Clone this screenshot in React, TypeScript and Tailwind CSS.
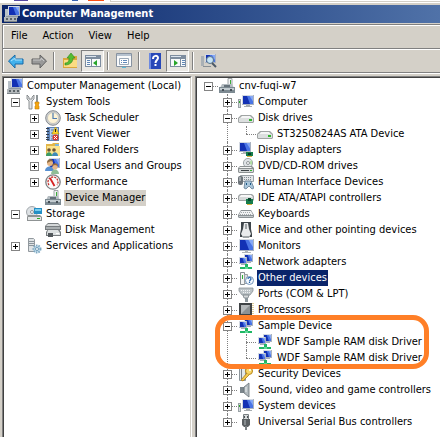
import React from "react";

type IconName =
  | "manage" | "tools" | "clock" | "event" | "folderShare" | "users" | "perf" | "device"
  | "storage" | "diskMgmt" | "services" | "computer" | "drive" | "display" | "dvd" | "hid"
  | "ide" | "keyboard" | "mouse" | "monitor" | "network" | "unknown" | "port" | "cpu"
  | "security" | "sound" | "usb";

const Screen = ({ x, y, w, h }: { x: number; y: number; w: number; h: number }) => (
  <g>
    <rect x={x} y={y} width={w} height={h} fill="#a9b2c0" />
    <rect x={x} y={y} width={w - 1} height={h - 1} fill="#d3d9e2" />
    <rect x={x + 1} y={y + 1} width={w - 2} height={h - 2} fill="#1331b4" />
    <path d={`M${x + w - 1} ${y + 1}v${h - 2}h-${(w - 2) * 0.3}l-${(w - 2) * 0.3} -${h - 2}z`} fill="#4a74e4" />
    <path d={`M${x + w - 1} ${y + 1}v${(h - 2) * 0.7}l-${(w - 2) * 0.35} -${(h - 2) * 0.7}z`} fill="#86a8f4" />
  </g>
);

const DriveBody = ({ y }: { y: number }) => (
  <g>
    <path d={`M3 ${y}h10l3 3v4l-1 1H1l-1-1v-4z`} fill="#a0a4a4" />
    <path d={`M4 ${y + 1}h8l2 2H2z`} fill="#f4f5f5" />
    <rect x="1" y={y + 3} width="14" height="4" fill="#dcdfdf" />
    <rect x="11" y={y + 4} width="3" height="2" fill="#2fb52b" />
  </g>
);

const art: Record<IconName, React.ReactNode> = {
  manage: (
    <g>
      <Screen x={4} y={0} w={12} h={10} />
      <rect x="1" y="3" width="3" height="8" fill="#b9c1c8" />
      <path d="M2 10h12v2H2z" fill="#8f99a2" />
      <path d="M0 11h13v4H0z" fill="#b3b8bb" />
      <path d="M2 12h2v2H2zM6 12h2v2H6zM10 12h2v2h-2z" fill="#5a6368" />
      <path d="M0 15h13v1H0z" fill="#7d8488" />
    </g>
  ),
  tools: (
    <g>
      <path d="M1 1v4l2 2v8h3V7l2-2V1L6 3v2H3V3z" fill="#e3e5e6" stroke="#73787b" strokeWidth=".8" />
      <path d="M10 1h2v7h-2z" fill="#8f9698" />
      <path d="M9 8h4v2l-1 1 1 1v3H9v-3l1-1-1-1z" fill="#f5a50d" stroke="#c57c08" strokeWidth=".6" />
    </g>
  ),
  clock: (
    <g>
      <circle cx="8" cy="8" r="7.3" fill="#d0d3d5" stroke="#85898d" />
      <circle cx="8" cy="8" r="5.5" fill="#fdf3d6" stroke="#a6a8a8" strokeWidth=".5" />
      <path d="M8 3v5.5h4" fill="none" stroke="#4f7cb0" strokeWidth="1.2" />
    </g>
  ),
  event: (
    <g>
      <rect x="2" y="1" width="12" height="14" fill="#5f84b8" />
      <rect x="5" y="2" width="8" height="12" fill="#b7cfec" />
      <path d="M1 2.500h3M1 5.500h3M1 8.500h3M1 11.500h3M1 13.500h3" stroke="#333d4a" />
      <path d="M6 4h3M6 7h3M6 10h3M6 13h6" stroke="#537ab0" />
      <path d="M10.500 1L14 8H7z" fill="#ffd52b" stroke="#b48c00" strokeWidth=".6" />
      <path d="M10.500 3v3" stroke="#222" />
      <circle cx="10.500" cy="11.500" r="3" fill="#d7352c" />
      <path d="M9 10l3 3m0-3l-3 3" stroke="#fff" />
    </g>
  ),
  folderShare: (
    <g>
      <path d="M1 2h6l1-1h6v13H1z" fill="#e2b64a" />
      <path d="M2 4h13v10H2z" fill="#fbe490" />
      <path d="M10 2h4v2h-4z" fill="#80b6da" />
      <circle cx="4" cy="8" r="1.800" fill="#6d5334" />
      <circle cx="9" cy="8" r="1.800" fill="#6d5334" />
      <path d="M1 14c0-5 6-5 6 0z" fill="#3b9a66" />
      <path d="M7 14c0-5 6-5 6 0z" fill="#3d8aba" />
    </g>
  ),
  users: (
    <g>
      <Screen x={4} y={0} w={11} h={10} />
      <circle cx="5" cy="5" r="3" fill="#e6b483" />
      <path d="M2 5c0-5 6-5 6-1L6 3z" fill="#8a6a42" />
      <path d="M0 13c0-6 9-6 9 0z" fill="#578fd0" />
      <circle cx="10" cy="9" r="2.600" fill="#e8b789" />
      <path d="M7 8c1-4 6-3 6 0l-3-1z" fill="#9a6b38" />
      <path d="M6 16c0-6 8-6 8 0z" fill="#8fbd96" />
    </g>
  ),
  perf: (
    <g>
      <circle cx="8" cy="8" r="7.200" fill="#fbfbfb" stroke="#7d8184" strokeWidth="1.300" />
      <path d="M4 11a5 5 0 1 1 8 0" fill="none" stroke="#c42f2a" strokeWidth="1.300" strokeDasharray="2 1" />
      <path d="M5 4l4.500 8" stroke="#d62222" strokeWidth="1.800" />
    </g>
  ),
  device: (
    <g>
      <path d="M9 .5h4v7H9z" fill="#f0f2f2" stroke="#8a9094" strokeWidth=".8" />
      <rect x="11" y="2" width="1" height="4" fill="#3eae3c" />
      <path d="M3 6h10l2 4H1z" fill="#b4bcc1" />
      <path d="M5 7h6v2H5z" fill="#66727b" />
      <path d="M0 9h16v6H0z" fill="#7d8a92" />
      <path d="M1 10h14v2H1z" fill="#c2cbd0" />
      <path d="M3 11h2v2H3zM11 11h2v2h-2z" fill="#444e56" />
    </g>
  ),
  storage: (
    <g>
      <circle cx="6" cy="6" r="5.500" fill="#dde1e4" stroke="#a2a8ac" />
      <circle cx="6" cy="6" r="1.500" fill="#fff" stroke="#92989c" />
      <rect x="8" y="2" width="8" height="6" fill="#248fc5" />
      <rect x="9" y="3" width="6" height="2" fill="#77cdee" />
      <path d="M2 9h12l2 2v4H1v-4z" fill="#8f9394" />
      <path d="M2 11h13v3H2z" fill="#e4e6e6" />
      <rect x="11" y="12" width="3" height="1" fill="#2bae26" />
    </g>
  ),
  diskMgmt: (
    <g>
      <path d="M3 1h10l3 3v4H0V4z" fill="#777c7f" />
      <path d="M3 2h10l2 2H1z" fill="#d5d8d9" />
      <path d="M1 5h14v2H1z" fill="#aaafb1" />
      <path d="M3 7h11l2 3v4H1v-4z" fill="#777c7f" />
      <path d="M3 8h10l2 3v2H2v-2z" fill="#dce0e1" />
      <path d="M3 11h5v4H3z" fill="#52585c" />
      <path d="M11 11h3v1h-3z" fill="#fff" />
    </g>
  ),
  services: (
    <g>
      <path d="M2.500.5h5l1 1v12h-6z" fill="#dfe3e5" stroke="#92999e" />
      <path d="M3 3.500h5M3 5.500h5M3 7.500h5" stroke="#8b959c" />
      <circle cx="11" cy="11" r="3.500" fill="#c5ddec" stroke="#7fa9c2" strokeWidth="2" strokeDasharray="1.500 1" />
      <circle cx="11" cy="11" r="1.500" fill="#fff" stroke="#6c9ab6" />
    </g>
  ),
  computer: (
    <g>
      <Screen x={4} y={1} w={12} h={10} />
      <path d="M8 11h4v1h2v1H6v-1h2z" fill="#a7acb0" />
      <rect x="0" y="5" width="3" height="9" fill="#9aa2a6" />
      <rect x="1" y="6" width="1" height="7" fill="#d5dadc" />
      <rect x="1" y="7" width="1" height="2" fill="#2ea62d" />
    </g>
  ),
  drive: <DriveBody y={5} />,
  display: (
    <g>
      <Screen x={1} y={0} w={12} h={10} />
      <path d="M5 10h4v2H3v-1h2z" fill="#b1b5b7" />
      <rect x="8" y="10" width="7" height="4" fill="#167c4b" />
      <rect x="10" y="11" width="3" height="2" fill="#073a25" />
      <path d="M9 14.500h5" stroke="#d9b040" />
    </g>
  ),
  dvd: (
    <g>
      <circle cx="10" cy="5" r="4.600" fill="#dfe3e6" stroke="#8d9498" strokeWidth=".8" />
      <path d="M10 5l4-3v5z" fill="#b1dda4" />
      <circle cx="10" cy="5" r="1.500" fill="#fff" stroke="#92979a" />
      <path d="M2 8h12l2 2v4l-1 1H1l-1-1v-4z" fill="#8c9192" />
      <path d="M2 9h11l1 1H1z" fill="#f3f4f4" />
      <rect x="1" y="11" width="14" height="3" fill="#d4d7d8" />
      <rect x="3" y="12" width="8" height="1" fill="#3d4447" />
      <rect x="12" y="12" width="2" height="1" fill="#2fb52b" />
    </g>
  ),
  hid: (
    <g>
      <path d="M2.500 1.500h13v6h-13z" fill="#e2e5e8" stroke="#9aa1a6" />
      <path d="M4 3.500h10M4 5.500h10" stroke="#858d92" strokeDasharray="1 1" />
      <rect x="0" y="2" width="5" height="9" rx="2" fill="#6c7379" />
      <path d="M2 3v4" stroke="#dce1e4" />
      <path d="M7 7h6l3 7-2 1-3-3-3 3-2-1z" fill="#a9c5da" stroke="#567087" strokeWidth=".7" />
      <path d="M8 9h1v2H8zM12 9h1v2h-1z" fill="#1d5884" />
    </g>
  ),
  ide: (
    <g>
      <path d="M2 4h12l2 2v4l-1 1H1l-1-1V6z" fill="#a2a6a7" />
      <path d="M3 5h10l2 2H1z" fill="#f7f7f7" />
      <rect x="1" y="7" width="14" height="3" fill="#d6d9d9" />
      <rect x="8" y="9" width="7" height="5" fill="#167c4b" />
      <path d="M10 8h3v3h-3z" fill="#0a4a30" />
      <path d="M9 14.500h5" stroke="#d9b040" />
    </g>
  ),
  keyboard: (
    <g>
      <path d="M3 4h10l3 5v2l-1 1H1l-1-1V9z" fill="#8b9195" />
      <path d="M3 5h10l2 4H1z" fill="#f1f2f3" />
      <path d="M3 6.500h10M2 8.500h12" stroke="#a2a8ac" strokeDasharray="1 1" />
      <path d="M1 10h14v1H1z" fill="#c4c9cc" />
    </g>
  ),
  mouse: (
    <g>
      <path d="M3 0h10v7l1 5v3H2v-3l1-5z" fill="#3d4449" />
      <path d="M6 1h4l1 6 2 5-2 3H5l-2-3 2-5z" fill="#e9ebec" />
      <path d="M8 2v5" stroke="#555d62" />
      <path d="M4 14h8l-1 2H5z" fill="#a1a6a8" />
    </g>
  ),
  monitor: (
    <g>
      <Screen x={1} y={1} w={15} h={12} />
      <path d="M7 13h3v1h3v1H4v-1h3z" fill="#b0b5b8" />
    </g>
  ),
  network: (
    <g>
      <Screen x={6} y={0} w={9} h={8} />
      <path d="M8 8h5v1H8z" fill="#a5afb7" />
      <Screen x={1} y={3} w={8} h={7} />
      <path d="M3 10h4v1H3z" fill="#a5afb7" />
      <path d="M7 10h3v3h4v2H2v-2h5z" fill="#20b765" />
      <path d="M7 13h3v2H7z" fill="#5fd898" />
    </g>
  ),
  unknown: (
    <g>
      <path d="M2.500 2.500h4v12h-4z" fill="#f4f5f5" stroke="#878d91" />
      <path d="M6.500 4.500h3v9h-3z" fill="#dcdfe0" stroke="#9ba0a4" />
      <rect x="4" y="5" width="1" height="4" fill="#31b235" />
      <circle cx="11.500" cy="10.500" r="4" fill="#f4f8fd" stroke="#7395bb" />
      <path d="M10 9c0-2 3-2 3 0 0 1-1.500 1-1.500 2.500m0 .5v1" fill="none" stroke="#2461a8" strokeWidth="1.200" />
    </g>
  ),
  port: (
    <g>
      <path d="M1 2h14v3l-3 4H4L1 5z" fill="#bcc3c7" stroke="#8b9398" strokeWidth=".8" />
      <path d="M3 4.500h10M5 6.500h7" stroke="#f0f2f3" strokeDasharray="1 1" />
      <path d="M5 9h6l-1 3H6z" fill="#d5d9db" stroke="#7b8489" strokeWidth=".8" />
      <path d="M7 12h3v4H7z" fill="#8c969c" />
    </g>
  ),
  cpu: (
    <g>
      <path d="M15 1v14M1 15h14" stroke="#c6a33c" strokeDasharray="1 1" />
      <rect x="1" y="1" width="13" height="13" fill="#3f4346" />
      <path d="M3 3h9v9H3z" fill="#8d9294" />
      <path d="M3 3h9l-9 9z" fill="#b4b8ba" />
    </g>
  ),
  security: (
    <g>
      <path d="M1.500 2.500h6v12h-6z" fill="#e2e7ea" stroke="#8c959b" />
      <path d="M3.500 1v12" stroke="#777f86" />
      <circle cx="11" cy="5" r="3.500" fill="#f7d768" stroke="#b88519" />
      <circle cx="12" cy="4" r="1" fill="#fff" />
      <path d="M9 7l-6 7 2 1 6-6" fill="#f2c94d" stroke="#ac7b18" strokeWidth=".8" />
    </g>
  ),
  sound: (
    <g>
      <path d="M2 5h4v6H2z" fill="#7b858b" />
      <path d="M6 5l5-4v14l-5-4z" fill="#b3bbbf" stroke="#687177" strokeWidth=".8" />
      <path d="M8 5v5" stroke="#eef1f2" />
    </g>
  ),
  usb: (
    <g>
      <path d="M5.500.5h5v5h-5z" fill="#d6dadb" stroke="#777d80" />
      <path d="M6 2h1v2H6zM9 2h1v2H9z" fill="#4d5356" />
      <path d="M4 5h8v6l-2 2H6l-2-2z" fill="#5a5f62" />
      <path d="M6 6h2v5H6z" fill="#858b8e" />
      <path d="M7 12h2v4H7z" fill="#7b8184" />
    </g>
  ),
};

function Icon({ name }: { name: IconName }) {
  return (
    <svg viewBox="0 0 16 16" className="size-4 shrink-0" aria-hidden="true">
      {art[name]}
    </svg>
  );
}

type TreeNode = {
  label: string;
  icon: IconName;
  state?: "open" | "closed";
  mark?: "active" | "inactive";
  ringed?: boolean;
  children?: TreeNode[];
};

const consoleTree: TreeNode[] = [
  {
    label: "System Tools", icon: "tools", state: "open",
    children: [
      { label: "Task Scheduler", icon: "clock", state: "closed" },
      { label: "Event Viewer", icon: "event", state: "closed" },
      { label: "Shared Folders", icon: "folderShare", state: "closed" },
      { label: "Local Users and Groups", icon: "users", state: "closed" },
      { label: "Performance", icon: "perf", state: "closed" },
      { label: "Device Manager", icon: "device", mark: "inactive" },
    ],
  },
  { label: "Storage", icon: "storage", state: "open", children: [{ label: "Disk Management", icon: "diskMgmt" }] },
  { label: "Services and Applications", icon: "services", state: "closed" },
];

const deviceTree: TreeNode = {
  label: "cnv-fuqi-w7", icon: "device", state: "open",
  children: [
    { label: "Computer", icon: "computer", state: "closed" },
    { label: "Disk drives", icon: "drive", state: "open", children: [{ label: "ST3250824AS ATA Device", icon: "drive" }] },
    { label: "Display adapters", icon: "display", state: "closed" },
    { label: "DVD/CD-ROM drives", icon: "dvd", state: "closed" },
    { label: "Human Interface Devices", icon: "hid", state: "closed" },
    { label: "IDE ATA/ATAPI controllers", icon: "ide", state: "closed" },
    { label: "Keyboards", icon: "keyboard", state: "closed" },
    { label: "Mice and other pointing devices", icon: "mouse", state: "closed" },
    { label: "Monitors", icon: "monitor", state: "closed" },
    { label: "Network adapters", icon: "network", state: "closed" },
    { label: "Other devices", icon: "unknown", state: "closed", mark: "active" },
    { label: "Ports (COM & LPT)", icon: "port", state: "closed" },
    { label: "Processors", icon: "cpu", state: "closed" },
    {
      label: "Sample Device", icon: "network", state: "open", ringed: true,
      children: [
        { label: "WDF Sample RAM disk Driver", icon: "network" },
        { label: "WDF Sample RAM disk Driver", icon: "network" },
      ],
    },
    { label: "Security Devices", icon: "security", state: "closed" },
    { label: "Sound, video and game controllers", icon: "sound", state: "closed" },
    { label: "System devices", icon: "computer", state: "closed" },
    { label: "Universal Serial Bus controllers", icon: "usb", state: "closed" },
  ],
};

function Expander({ open, label }: { open: boolean; label: string }) {
  return (
    <button type="button" aria-label={`${open ? "Collapse" : "Expand"} ${label}`} className="relative block size-[9px] border border-[#848484] bg-white">
      <svg viewBox="0 0 7 7" className="block size-[7px]" shapeRendering="crispEdges">
        <path d={open ? "M1 3h5v1H1z" : "M1 3h5v1H1zM3 1h1v5H3z"} fill="#000" />
      </svg>
    </button>
  );
}

function Branch({ node, lines, root, last }: { node: TreeNode; lines: boolean; root?: boolean; last?: boolean }) {
  const mark =
    node.mark === "active" ? "bg-[#0a246a] text-white" : node.mark === "inactive" ? "bg-[#d4d0c8]" : "";
  return (
    <li role="treeitem" aria-expanded={node.state ? node.state === "open" : undefined} className="relative">
      {lines && !root && (
        <span className={`absolute top-0 left-[9px] border-l border-dotted border-[#808080] ${last ? "h-2" : "h-full"}`} />
      )}
      <div className="flex h-4 items-center">
        <div className="relative flex h-4 w-[19px] shrink-0 items-center pl-[5px]">
          {lines && <span className="absolute top-2 right-0 left-[9px] border-t border-dotted border-[#808080]" />}
          {node.state && <Expander open={node.state === "open"} label={node.label} />}
        </div>
        <span className="relative ml-px flex items-center gap-[3px]">
          <Icon name={node.icon} />
          <span className={`px-px leading-4 whitespace-nowrap ${mark}`}>{node.label}</span>
        </span>
      </div>
      {node.children && (
        <ul role="group" className="pl-[19px]">
          {node.children.map((child, i) => (
            <Branch key={i} node={child} lines={lines} last={i === node.children!.length - 1} />
          ))}
        </ul>
      )}
      {node.ringed && (
        <span className="pointer-events-none absolute -top-[3px] -bottom-[3px] -left-[3px] z-10 w-[214px] rounded-[16px] border-[5px] border-[#ff7f27]" />
      )}
    </li>
  );
}

const Divider = () => <span className="mx-[3px] h-[18px] w-[2px] border-r border-l border-r-white border-l-[#808080]" />;

function ToolButton({ label, pressed, children }: { label: string; pressed?: boolean; children: React.ReactNode }) {
  return (
    <button
      type="button"
      aria-label={label}
      className={`flex h-[22px] w-[23px] items-center justify-center border ${
        pressed ? "border-t-[#808080] border-r-white border-b-white border-l-[#808080] bg-[#eae8e4]" : "border-transparent"
      }`}
    >
      <svg viewBox="0 0 16 16" className="size-4" aria-hidden="true">{children}</svg>
    </button>
  );
}

const PaneWindow = () => (
  <g>
    <path d="M0 2h16v12H0z" fill="#7e8d9f" />
    <path d="M1 3h10v1H1z" fill="#dce5ef" />
    <path d="M1 6h14v7H1z" fill="#f8fafb" />
  </g>
);

export default function App() {
  return (
    <main className="flex min-h-screen flex-col bg-[#d4d0c8] font-['DejaVu_Sans_Condensed','DejaVu_Sans',sans-serif] text-[11px] text-black">
      <div className="flex h-[3px] shrink-0 border-b border-white bg-white">
        <span className="ml-3.5 h-px w-3.5 bg-[#5546a0]" />
        <span className="ml-11 h-px w-1.5 bg-[#3a64b0]" />
        <span className="ml-2.5 h-px w-4 bg-[#fb4f14]" />
        <span className="ml-1.5 h-0.5 grow border-b border-l border-[#d4d0c8]" />
      </div>
      <header className="mt-0.5 ml-0.5 flex h-[18px] shrink-0 items-center gap-0.5 bg-linear-to-r from-[#0a246a] to-[#5072a8] pl-0.5 text-white">
        <Icon name="manage" />
        <h1 className="font-bold whitespace-nowrap">Computer Management</h1>
      </header>
      <nav className="mt-px ml-0.5 flex h-6 shrink-0 items-center border-t border-l border-[#808080] pl-px shadow-[inset_1px_1px_0_#fff]">
        {["File", "Action", "View", "Help"].map((item) => (
          <button key={item} type="button" className="pr-2 pl-[7px]">{item}</button>
        ))}
      </nav>
      <div role="toolbar" aria-label="Standard" className="ml-0.5 flex h-[25px] shrink-0 items-center border-y border-l border-[#808080] pl-px shadow-[inset_1px_1px_0_#fff,0_1px_0_#fff]">
        <ToolButton label="Back">
          <path d="M.5 8L7 2v4h8v5H7v4z" fill="#43b1ec" stroke="#1769a7" />
          <path d="M3 8l4-3v2h7" fill="none" stroke="#a8e1fc" />
        </ToolButton>
        <ToolButton label="Forward">
          <path d="M15.500 8L9 2v4H1v5h8v4z" fill="#999" stroke="#626262" />
          <path d="M2 7h8V5l3 3" fill="none" stroke="#c8c8c8" />
        </ToolButton>
        <Divider />
        <ToolButton label="Up one level">
          <path d="M1 5h5l1-2h8v12H1z" fill="#dba73c" />
          <path d="M2 7h13v7H2z" fill="#fbdc83" />
          <path d="M3 10c4 0 4-3 4-5H5l4-5 4 5h-2c0 4-3 7-8 7z" fill="#54bd32" stroke="#2c8720" strokeWidth=".6" />
        </ToolButton>
        <ToolButton label="Show or hide console tree" pressed>
          <PaneWindow />
          <path d="M6 6h1v7H6z" fill="#7e8d9f" />
          <path d="M2 7.500h3M2 9.500h3M2 11.500h3" stroke="#6086b5" />
          <path d="M12 7v6L8 10z" fill="#28a429" />
        </ToolButton>
        <Divider />
        <ToolButton label="Properties">
          <path d="M.5.5h15v13H.5z" fill="#f9fafb" stroke="#8792a0" />
          <path d="M1 1h14v2H1z" fill="#b6c2cf" />
          <path d="M3.500 5.500h9v6h-9z" fill="#fff" stroke="#9ba9b8" />
          <path d="M5 7.500h1M5 9.500h1M7 7.500h4M7 9.500h4" stroke="#6288b9" />
          <path d="M6 14h4v1H6z" fill="#59bbdc" />
        </ToolButton>
        <Divider />
        <ToolButton label="Help">
          <path d="M2 0h12v16H2z" fill="#2748b8" />
          <path d="M2 0h2v16H2z" fill="#6d8ae0" />
          <path d="M6 6c0-4 5-4 5-1 0 2-2.500 2-2.500 5m0 1v2" fill="none" stroke="#fff" strokeWidth="2" />
        </ToolButton>
        <ToolButton label="Show or hide action pane" pressed>
          <PaneWindow />
          <path d="M10 6h1v7h-1z" fill="#7e8d9f" />
          <path d="M12 7.500h3M12 9.500h3M12 11.500h3" stroke="#6086b5" />
          <path d="M4 7v6l4-3z" fill="#28a429" />
        </ToolButton>
        <Divider />
        <ToolButton label="Scan for hardware changes">
          <rect x="0" y="3" width="3" height="10" fill="#a9b0b5" />
          <Screen x={4} y={1} w={11} h={9} />
          <path d="M2 13.500h8" stroke="#888f94" />
          <circle cx="9" cy="7" r="3.500" fill="#c6e4f6" stroke="#587389" />
          <path d="M11 10l4 4" stroke="#4c5966" strokeWidth="2" />
        </ToolButton>
      </div>
      <div className="mt-[3px] ml-0.5 flex grow gap-[3px]">
        <aside className="w-[190px] shrink-0 border-t border-r border-l border-[#808080] border-r-white">
          <ul role="tree" aria-label="Console tree" className="h-full border-t border-r border-l border-[#404040] border-r-[#d4d0c8] bg-white pl-0.5">
            <li role="treeitem" aria-expanded="true">
              <div className="ml-px flex h-4 items-center gap-[3px]">
                <Icon name="manage" />
                <span className="px-px whitespace-nowrap">Computer Management (Local)</span>
              </div>
              <ul role="group">
                {consoleTree.map((node) => <Branch key={node.label} node={node} lines={false} />)}
              </ul>
            </li>
          </ul>
        </aside>
        <section className="min-w-0 grow border-t border-l border-[#808080]">
          <ul role="tree" aria-label="Devices" className="h-full overflow-hidden border-t border-l border-[#404040] bg-white pl-0.5">
            <Branch node={deviceTree} lines root />
          </ul>
        </section>
      </div>
    </main>
  );
}
